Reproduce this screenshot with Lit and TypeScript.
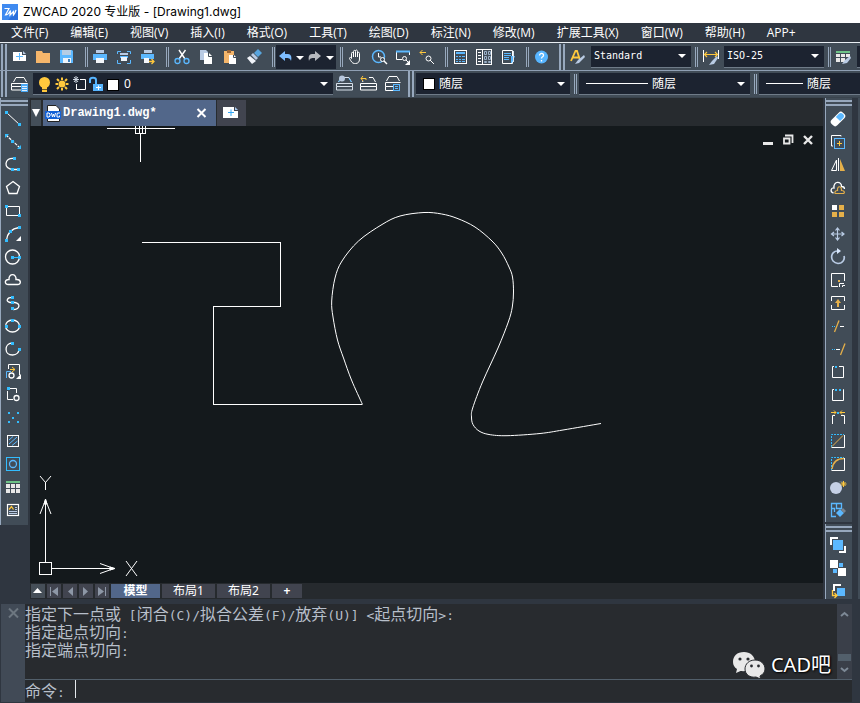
import { LitElement, html, css, svg, type SVGTemplateResult } from "lit";
import { customElement, property, state } from "lit/decorators.js";
import { classMap } from "lit/directives/class-map.js";

const W = "#ffffff";
const B = "#5bb8ff";
const C = "#33bdff";
const Y = "#ffc83d";
const O = "#e5b04a";
const P = "#b9cbe4";

const dot = (x: number, y: number, c = C) =>
  svg`<rect x=${x - 1} y=${y - 1} width="3" height="3" fill=${c} />`;
const ln = (d: string, c = W, w = 1) =>
  svg`<path d=${d} fill="none" stroke=${c} stroke-width=${w} />`;
const fl = (d: string, c = W) => svg`<path d=${d} fill=${c} />`;

const stack = (c = W) => svg`
  ${ln("M6.500 10L9 5.500H17L19.500 10M4.500 11.500H20.500M4.500 11.500V14.500H20.500V11.500M4.500 14.500V18H20.500V14.500", c)}`;

/* Top icons sit in a 24x24 box, side icons in a 24x23 box. */
const icons: Record<string, SVGTemplateResult> = {
  new: svg`${fl("M6 7H15V10H19V16H6Z")}${ln("M9 11.500H16M12.500 8V15", B)}${fl("M16 6L19 9H16Z", P)}`,
  open: fl("M5 6H11L12 8H19V18H5Z", "#f5b66b"),
  save: svg`${fl("M5 5H17L18 6V18H5Z", B)}${fl("M7 5H16V10H7Z", "#b5cde4")}${fl("M8 13H16V18H8Z", "#eef4fb")}${fl("M13 14H15V17H13Z", "#3f82bd")}`,
  print: svg`${fl("M8 5H16V8H8Z", P)}${fl("M5 9H19V15H5Z", B)}${fl("M8 13H16V18H8Z", "#f4f7fb")}`,
  preview: svg`${ln("M5.500 9V6.500H9M15 6.500H18.500V9M18.500 15V18.500H15M9 18.500H5.500V15", B)}${fl("M8 8H16V10H8Z", P)}${fl("M8 11H16V13H8Z", B)}${fl("M9 12H15V16H9Z", "#eef4fb")}`,
  plot: svg`${fl("M8 5H16V8H8Z", P)}${fl("M5 9H18V14H5Z", B)}${fl("M8 13H13V18H8Z", "#f4f7fb")}${ln("M13 16.500H18M15.500 14L18 16.500L15.500 19", Y, 1.3)}`,
  cut: svg`${ln("M9 5L15 14M15.500 5L9 14", W, 1.4)}<circle cx="7.500" cy="16" r="2.500" fill="none" stroke=${B} stroke-width="1.300"/><circle cx="16.500" cy="16" r="2.500" fill="none" stroke=${B} stroke-width="1.300"/>`,
  copy: svg`${fl("M6 5H12L14 7V15H6Z", P)}${fl("M10 8H15L18 11V19H10Z")}${ln("M14.500 8V11.500H18", "#414c57")}`,
  paste: svg`${fl("M6 6H16V18H6Z", "#f5b66b")}${fl("M9 5H13V8H9Z", "#9a6537")}${fl("M11 10H16L18 12V19H11Z")}${ln("M15.500 10V12.500H18", "#414c57")}`,
  brush: svg`${fl("M16 4L20 8L16 12L12 8Z", "#58a5de")}${fl("M11 8L16 13L14 15L9 10Z", P)}${fl("M8 11L14 16L10 19L5 13Z", "#f2f5fa")}`,
  hand: ln("M8.500 13.500V8.500C8.500 7 10 7 10.500 8.500V6.500C10.500 5 12.500 5 12.500 6.500V5.500C13 4.500 14.500 5 14.500 6.500V8C15 7 16.500 7 16.500 8.500V14C16.500 17 15 18.500 12.500 18.500H11.500C9 18.500 8 16 6.500 13.500C6.500 12 8 12 8.500 13.500M10.500 8V12M12.500 7V12M14.500 8V12", W),
  zoomrt: svg`<circle cx="11.500" cy="11.500" r="6" fill="none" stroke=${B} stroke-width="1.500"/>${ln("M11.500 8V12H14", W)}<circle cx="15.500" cy="14.500" r="2" fill="#414c57" stroke="#fff"/>${ln("M17 16L20 19", W, 1.4)}`,
  zoomwin: svg`${ln("M5.500 14.500V6.500H18.500V10M5.500 14.500H11", W)}${ln("M5 6.500H19", B, 2)}<circle cx="13.500" cy="13.500" r="2" fill="none" stroke="#fff"/>${ln("M15 15L17 17", W)}${fl("M19 15V20H14Z")}`,
  zoomprev: svg`${ln("M5 7.500H11M7.500 5L5 7.500L7.500 10", Y)}<circle cx="13.500" cy="13.500" r="2.500" fill="none" stroke="#fff"/>${ln("M15 15L19 19", W)}`,
  calc: svg`<rect x="6.500" y="5.500" width="12" height="13" fill="none" stroke="#fff"/>${fl("M8 7H17V9H8Z", B)}${ln("M8 11.500H17M8 14.500H17M8 16.500H17", B)}${ln("M10.500 10V18M13.500 10V18", "#414c57")}`,
  palette: svg`<rect x="4.500" y="4.500" width="15" height="15" fill="none" stroke="#fff"/>${ln("M10.500 4V20")}${ln("M6 7.500H9M6 10.500H9M6 13.500H9M6 16.500H9", W)}<path d="M12.500 6.500h2v3h-2zM16.500 6.500h2v3h-2zM12.500 11.500h2v3h-2zM16.500 11.500h2v3h-2zM12.500 16.500h2v1h-2zM16.500 16.500h2v1h-2z" fill="none" stroke="#9bb0c8"/>`,
  props: svg`${ln("M6.500 5.500H16.500V18.500H6.500Z")}${ln("M8 8.500H15M8 10.500H15M8 12.500H13M8 14.500H13", B)}${fl("M15 11H19L16 18H15Z", B)}${fl("M17 6H18V17H17Z", "#dce6f0")}`,
  style: svg`${ln("M5 16L9.500 6H11L14 15M7 12.500H13", Y, 1.8)}${fl("M18 10L19 12L13 18L9 19L12 15Z", P)}`,
  dim: svg`${ln("M4.500 5V17M19.500 5V14")}${ln("M5 9.500H19M8 7L5.500 9.500L8 12M16 7L18.500 9.500L16 12", Y, 1.2)}${fl("M18 11L19 13L15 19L10 20L13 16Z", P)}`,
  table: svg`${fl("M5 6H19V8H5Z", "#6cc287")}${fl("M5 9H9V12H5ZM10 9H14V12H10ZM15 9H19V12H15ZM5 13H9V17H5ZM10 13H14V17H10Z", "#e8e8e8")}${fl("M19 11L20 13L16 18L11 19L14 15Z", P)}`,
  layers: svg`${stack()}${fl("M14 12H21V20H14Z", "#4aa9f5")}${ln("M15 14.500H20M15 16.500H20M15 18.500H20", "#dff0ff")}`,
  laycur: svg`${stack("#d7e0ea")}${ln("M6.500 10L9 6.500M17 6.500L19.500 10", B)}<circle cx="10" cy="6.500" r="3" fill="#b7c7dd"/>`,
  layprev: svg`${stack()}${fl("M4 3H13V9H4Z", "#414c57")}${ln("M10 8V6.500H5M7 4L5 6.500L7 9", Y)}`,
  laystate: svg`${ln("M6.500 9L9 4.500H17L19.500 9M5.500 10.500H20.500M5.500 10.500V14.500H13M5.500 14.500V18.500H13")}<rect x="13.500" y="12.500" width="6" height="6" fill="#414c57" stroke=${B}/>${ln("M15 14.500H18M15 16.500H18", B)}`,

  line: svg`${ln("M6 5L19 17")}${dot(5, 4)}${dot(18, 16)}`,
  xline: svg`<path d="M5 4L18 16" stroke="#fff" stroke-width="1.200" stroke-dasharray="3 1"/>${dot(11, 10)}${fl("M4 3H8L4 7ZM20 18H16L20 14Z", C)}`,
  pline: svg`${ln("M13 4.500C3 3 2 15.500 12 15.500H17", W, 1.3)}${dot(13, 4)}${dot(11, 15)}${dot(17, 15)}`,
  polygon: ln("M12 4.500L18.500 9.500L16 16.500H8L5.500 9.500Z", W, 1.3),
  rect: svg`${ln("M5.500 6.500H18.500V15.500H5.500Z")}${dot(5, 6)}${dot(18, 15)}`,
  arc: svg`${ln("M5.500 17C6.500 10 11 5.500 18 4.500", W, 1.3)}${dot(5, 17)}${dot(9, 8)}${dot(18, 4)}${fl("M20 13V18H15Z")}`,
  circle: svg`<circle cx="11.500" cy="11" r="7" fill="none" stroke="#fff" stroke-width="1.300"/>${ln("M12 11.500H18", C)}${dot(11, 11)}${dot(18, 11)}`,
  cloud: ln("M7.500 15.500C3 15.500 3.500 10 8 10.500C7.500 4 15.500 4 15 10.500C20.500 10 20.500 15.500 16.500 15.500Z", W, 1.4),
  spline: svg`${ln("M12 5.500C6 5 4 9.500 9 10.500H14C20 11.500 19 17.500 12 17.500", W, 1.3)}${dot(11, 5)}${dot(11, 10)}${dot(11, 16)}`,
  ellipse: svg`<ellipse cx="11.500" cy="11" rx="7" ry="6" fill="none" stroke="#fff" stroke-width="1.300"/>${dot(11, 5)}${dot(5, 11)}${dot(18, 11)}`,
  earc: svg`${ln("M11 5C3 5.500 3 17 11.500 17C16 17 18 14 18 11", W, 1.3)}${dot(11, 5)}${dot(18, 11)}`,
  insert: svg`${ln("M7.500 8V3.500H18.500V14")}${ln("M9 8.500H14M11 6L14 8.500L11 11", Y)}${ln("M10 10.500H5.500V17", B)}<circle cx="10.500" cy="14.500" r="2.500" fill="none" stroke="#fff" stroke-width="1.300"/>${fl("M20 13V18H15Z")}`,
  block: svg`${ln("M9 4.500H15.500V9M6.500 7V15.500H12")}${dot(7, 4)}<circle cx="15.500" cy="14" r="2.500" fill="none" stroke="#fff" stroke-width="1.300"/>`,
  point: svg`<path d="M7 5h2v2h-2zM16 5h2v2h-2zM11 10h2v2h-2zM7 14h2v2h-2zM16 14h2v2h-2z" fill=${C}/>`,
  hatch: svg`<rect x="6.500" y="5.500" width="11" height="11" fill="none" stroke="#fff"/>${ln("M8 10L12 6.500M8 14L16 7M11 15.500L16.500 11", B)}`,
  region: svg`<rect x="5.500" y="4.500" width="13" height="13" fill="none" stroke=${C}/><circle cx="12" cy="11" r="3.500" fill="none" stroke=${B} stroke-width="1.300"/>`,
  grid: svg`${fl("M5 5H19V7H5Z", "#6cc287")}${fl("M5 8H9V12H5ZM10 8H14V12H10ZM15 8H19V12H15ZM5 13H9V17H5ZM10 13H14V17H10ZM15 13H19V17H15Z", "#e8e8e8")}`,
  mtext: svg`<rect x="6.500" y="5.500" width="11" height="11" fill="none" stroke="#fff" stroke-width="1.200"/>${ln("M8 10.500L10.500 7.500L12.500 10.500", Y, 1.3)}${ln("M14 8.500H16M14 10.500H16M8 12.500H16M8 14.500H16", P)}`,

  erase: svg`<g transform="rotate(-45 12 11)"><rect x="4" y="7" width="16" height="8" rx="3" fill="#fff"/><path d="M12 8H16A3 3 0 0 1 19 11V11A3 3 0 0 1 16 14H12Z" fill=${B}/></g>`,
  dup: svg`${ln("M15 5.500V4.500H5.500V15H7")}<rect x="8.500" y="7.500" width="10" height="10" fill="none" stroke=${B}/>${ln("M11 12.500H16M13.500 10V15", Y)}`,
  mirror: svg`${ln("M12.500 4V17")}${ln("M10.500 6V16.500H5.500Z")}${fl("M14 5L19 17H14Z", O)}`,
  offset: svg`${ln("M7.500 16C3.500 15 5 10.500 8 11C7 3.500 16 4 15.500 9.500C17.500 9.500 18.500 11 18.500 12", W, 1.3)}${ln("M9.500 16.500H17C19 16.500 19 13.500 15.500 13.500C15.500 8.500 11 8.500 11.500 13.500C8.500 13.500 8.500 16.500 9.500 16.500", O, 1.2)}`,
  array: svg`${fl("M6 5H11V10H6Z")}${fl("M13 5H18V10H13ZM6 12H11V17H6ZM13 12H18V17H13Z", O)}`,
  move: ln("M11.500 5V17M5.500 11H18M9.500 7.500L11.500 5L13.500 7.500M9.500 14.500L11.500 17L13.500 14.500M8 9L5.500 11L8 13M15.500 9L18 11L15.500 13", P, 1.2),
  rotate: svg`${ln("M12 5C4 4.500 3 16.500 12 17.500C17 17.500 19 13 18 10", P, 1.7)}${fl("M11 2L15 5L11 8Z", "#d7e6fb")}`,
  scale: svg`${ln("M12 17.500H5.500V4.500H18.500V12")}<rect x="12" y="11" width="2" height="2" fill=${O}/>${ln("M13.500 18V14.500H18M16.500 18V16.500H19", W)}`,
  stretch: svg`${ln("M5.500 9V4.500H18.500V9M5.500 13V17.500H18.500V13")}${fl("M12 7L15 11H13V15H11V11H9Z", O)}`,
  trim: svg`${ln("M14 11.500H18")}${ln("M6 11.500H7M8 11.500H9", C)}${ln("M8.500 17L13 5.500", O, 1.3)}`,
  extend: svg`${ln("M10 11.500H14")}${ln("M6 11.500H7M8 11.500H9", C)}${ln("M14.500 17L19 5.500", O, 1.3)}`,
  brk1: svg`${ln("M8 5.500H6.500V16.500H17.500V5.500H13")}<rect x="9" y="5" width="2" height="2" fill=${C}/>`,
  brk2: svg`${ln("M8 5.500H6.500V16.500H17.500V5.500H17")}<path d="M9 5h2v2h-2zM13 5h2v2h-2z" fill=${C}/>`,
  join: svg`${ln("M6.500 17V8.500H9M15 8.500H18.500V17")}${ln("M5 5.500H10M8 3.500L10 5.500L8 7.500M19 5.500H14M16 3.500L14 5.500L16 7.500", Y)}<rect x="11" y="5" width="2" height="2" fill=${C}/>`,
  chamfer: svg`${ln("M5.500 17.500H18.500V5")}<path d="M5.500 17V4.500H18" fill="none" stroke=${C} stroke-dasharray="2 1"/>${ln("M6 16.500L17 5.500", O)}`,
  fillet: svg`${ln("M5.500 17.500H18.500V5")}<path d="M5.500 17V4.500H18" fill="none" stroke=${C} stroke-dasharray="2 1"/>${ln("M6 16C7 9 11 5.500 18 5.500", O, 1.4)}`,
  explode: svg`<circle cx="10" cy="12" r="6" fill="#c5d0e6"/>${ln("M13 6L16 5.500L17 8", "#5c6874", 1.5)}${ln("M17.500 5V11M14.500 8H20.500M15.500 6L19.500 10M19.500 6L15.500 10", Y)}`,
  purge: svg`${ln("M5.500 4.500H10.500V9.500H15.500V4.500H5.500V17.500H10M5.500 9.500H8.500V13", B, 1.3)}${fl("M14 10L18 14L14 18L10 14Z", B)}${fl("M17 9L20 12L18 14L15 11Z", "#7b8590")}`,
  front: svg`${ln("M12 4H5V11M19 12V18H13", W, 2)}${fl("M7 6H17V16H7Z", B)}`,
  back: svg`${fl("M4 3H12V11H4ZM12 11H20V19H12Z")}${fl("M13 6H17V10H13ZM7 12H11V16H7Z", B)}`,
  above: svg`${ln("M8 11V5H15", W, 2)}${fl("M11 8H19V16H11Z", B)}${ln("M6.500 10V15.500H11M8.500 13L11 15.500L8.500 18", Y, 1.3)}`,
};

type Pt = [number, number];

/* Catmull-Rom spline through a list of fit points. */
function smooth(p: Pt[]): string {
  let d = `M${p[0][0]} ${p[0][1]}`;
  for (let i = 0; i < p.length - 1; i++) {
    const a = p[i - 1] ?? p[i], b = p[i], c = p[i + 1], e = p[i + 2] ?? c;
    d += `C${b[0] + (c[0] - a[0]) / 6} ${b[1] + (c[1] - a[1]) / 6} ${c[0] - (e[0] - b[0]) / 6} ${c[1] - (e[1] - b[1]) / 6} ${c[0]} ${c[1]}`;
  }
  return d;
}

const omega: Pt[] = [
  [332.5, 278.5], [321.5, 254], [313.5, 232], [307.5, 214], [303, 191], [301.7, 175], [305, 152], [312, 135],
  [328.5, 115], [352, 98.500], [370, 90], [394, 86.5], [411.7, 88], [427, 92.3], [445, 101],
  [462, 115], [471.7, 127], [479, 141], [482.500, 151], [483.5, 166], [482.3, 181], [478.3, 196], [468, 222],
  [452.5, 256], [442.7, 282], [441.5, 291], [443, 298.500], [449, 305], [459, 308.5], [477, 309.7],
  [510, 307.5], [533, 304], [571, 297.5],
];

const shared = css`
  *, *::before { box-sizing: border-box; }
  button, input, select {
    font: inherit; color: inherit; background: none; border: 0; margin: 0; padding: 0;
    border-radius: 0; outline: none; appearance: none;
  }
  svg { display: block; flex: none; }
`;

@customElement("cad-tool")
class CadTool extends LitElement {
  @property() icon = "";
  @property({ type: Boolean }) side = false;
  static styles = [shared, css`
    :host { display: block; flex: none; width: 24px; }
    button { display: block; width: 24px; overflow: hidden; }
  `];
  render() {
    const h = this.side ? 23 : 24;
    return html`<button aria-label=${this.icon}>
      <svg width="24" height=${h} viewBox="0 0 24 ${h}">${icons[this.icon]}</svg>
    </button>`;
  }
}

@customElement("cad-combo")
class CadCombo extends LitElement {
  @property() label = "";
  @property() value = "";
  @property({ type: Boolean }) mono = false;
  @property({ type: Boolean }) bare = false;
  static styles = [shared, css`
    :host { display: flex; align-items: center; height: 22px; background: #1c2330; border-bottom: 1px solid #6f7b88; padding: 0 4px 0 3px; color: #fff; font-size: 12px; }
    select { flex: 1; min-width: 0; width: 0; height: 20px; }
    .mono { font-family: "DejaVu Sans Mono", monospace; font-size: 10px; }
    option { color: #fff; background: #1c2330; }
  `];
  render() {
    return html`<slot></slot>
      <select class=${classMap({ mono: this.mono })} aria-label=${this.label}>
        <option>${this.value}</option>
      </select>
      ${this.bare ? "" : html`<svg width="10" height="6" viewBox="0 0 10 6"><path d="M1 1H9L5 5Z" fill="#fff"/></svg>`}`;
  }
}

@customElement("app-root")
class AppRoot extends LitElement {
  @state() private tab = "模型";

  static styles = [shared, css`
    :host {
      display: flex; flex-direction: column; min-height: 100vh; overflow: hidden;
      background: #2f3640; color: #fff; font: 12px/16px "Noto Sans", "Noto Sans CJK SC", sans-serif;
    }
    .title { display: flex; align-items: center; gap: 5px; height: 23px; padding-left: 2px; background: #fff; color: #000; font-family: "Inter", "Noto Sans CJK SC", sans-serif; }
    .menu { display: flex; height: 20px; background: #2f3640; border-bottom: 1px solid #e8edf2; }
    .menu button { padding: 0 11px; white-space: nowrap; font-family: "Open Sans", "Noto Sans CJK SC", sans-serif; }
    .bar { display: flex; align-items: center; height: 28px; background: #414c57; border-bottom: 1px solid #8f9fb3; overflow: hidden; }
    .bar > * { flex: none; }
    .bar.second { height: 27px; border-bottom-color: #3a444e; }
    .grip { width: 7px; height: 26px; padding: 0 0 0 1px; }
    .grip::before { content: ""; display: block; width: 6px; height: 100%; border: solid #97a8bd; border-width: 0 2px; }
    .sep { width: 9px; height: 20px; padding-left: 6px; }
    .sep::before { content: ""; display: block; width: 3px; height: 100%; border: solid #97a8bd; border-width: 0 1px; }
    .wide { width: 10px; }
    .thin { width: 7px; padding-left: 4px; }
    .mid { width: 8px; padding-left: 4px; }
    .history { display: flex; align-items: center; width: 60px; height: 24px; background: #1c2330; }
    .combo { width: 100px; margin-left: 1px; }
    .layer { width: 300px; margin-left: 2px; margin-right: -1px; }
    .color { width: 154px; margin-left: 1px; }
    .ltype { width: 171px; margin-left: 2px; }
    .fill { flex: 1; min-width: 0; margin-left: 2px; }
    .swatch { width: 12px; height: 12px; background: #fff; border: 1px solid #000; margin: 0 4px; }
    .stroke { height: 1px; background: #fff; margin: 0 4px; width: 62px; }
    .stroke.short { width: 37px; }
    .lead { width: 11px; padding-left: 4px; }

    .main { display: flex; flex: 1; min-height: 400px; }
    .left { width: 28px; margin-right: 2px; }
    .strip { display: flex; flex-direction: column; background: #414c57; border-left: 1px solid #97a8bd; }
    .hgrip { height: 10px; padding-top: 2px; flex: none; }
    .hgrip::before { content: ""; display: block; height: 6px; border: solid #97a8bd; border-width: 2px 0; }
    .strip .end { height: 3px; }
    .right { width: 27px; margin: 0 6px 0 2px; height: 501px; overflow: hidden; display: flex; flex-direction: column; gap: 2px; }
    .right .strip { flex: none; }
    .edge { width: 2px; background: #414c57; }

    .center { display: flex; flex-direction: column; flex: 1; min-width: 0; }
    .tabs { display: flex; height: 28px; padding-left: 1px; background: #272b2f; }
    .tabs > * { margin-top: 2px; height: 26px; }
    .list { width: 10px; margin-right: 2px; background: #444f59; display: flex; align-items: center; justify-content: center; }
    .doc { display: flex; align-items: center; width: 173px; padding: 0 9px 0 2px; background: #52678a; margin-right: 1px; font: bold 12px/16px "Liberation Mono", monospace; gap: 1px; }
    .doc button { margin-left: auto; }
    .add { width: 29px; background: #41444f; padding: 0 2px; }
    .canvas { position: relative; flex: 1; background: #14191c; overflow: hidden; }
    .drawing { width: 100%; height: 100%; position: absolute; inset: 0; }
    .ucs { position: absolute; left: 0; bottom: 0; }
    .winctl { position: absolute; top: 5px; right: 5px; display: flex; }
    .sheets { display: flex; height: 16px; padding: 1px 0 1px 1px; gap: 2px; background: #262a2e; }
    .sheets button { height: 14px; background: #41444f; text-align: center; line-height: 14px; }
    .nav { width: 14px; }
    .nav.up { background: #464f58; }
    .sheet { width: 53px; }
    .sheets .plus { width: 30px; font-weight: bold; }
    .sheets .on { width: 49px; background: #52678a; font-weight: bold; }

    .command { display: flex; height: 104px; padding: 5px 8px 1px 1px; }
    .side { width: 24px; background: #414a56; padding-top: 3px; }
    .side svg { margin: 0 auto; }
    .console { flex: 1; min-width: 0; display: flex; flex-direction: column; background: #282b2f; color: #b7bfca; font: 16px/18px "Noto Sans CJK SC", sans-serif; }
    .console .lat { font-family: "DejaVu Sans Mono", monospace; font-size: 13px; line-height: 16px; }
    .log { display: flex; height: 75px; flex: none; }
    .lines { flex: 1; position: relative; }
    .lines p { display: flex; align-items: baseline; height: 18px; margin: 0; white-space: pre; }
    .scroll { width: 15px; background: #3a3f49; display: flex; flex-direction: column; align-items: center; padding: 7px 0 6px; }
    .thumb { width: 13px; height: 7px; background: #525f6b; margin: auto 0 6px; }
    .prompt { flex: 1; display: flex; align-items: center; border-top: 1px solid #525f6b; }
    .prompt label { display: flex; align-items: baseline; width: 50px; white-space: pre; }
    .prompt input { flex: 1; min-width: 0; }
    .caret { width: 1px; height: 18px; background: #e4e8ec; align-self: flex-start; }
    .mark { position: absolute; right: 6px; bottom: 0; display: flex; align-items: center; gap: 5px; color: #fff; font: 20px/28px "Noto Sans", "Noto Sans CJK SC", sans-serif; text-shadow: 0 0 2px #000, 1px 1px 2px #000; }
  `];

  private tools(names: string, side = false) {
    return names.split(" ").map((n) => html`<cad-tool icon=${n} ?side=${side}></cad-tool>`);
  }

  /* Half-width glyphs take the narrow face, ideographs keep the full-width one. */
  private mixed(text: string) {
    return text.split(/([\x20-\x7e]+)/).map((s) => (/^[\x20-\x7e]/.test(s) ? html`<span class="lat">${s}</span>` : s));
  }

  private nav(label: string, d: string, up = false) {
    return html`<button class=${classMap({ nav: true, up })} aria-label=${label}>
      <svg width="14" height="14" viewBox="0 0 14 14"><path d=${d} fill=${up ? W : "#8d97a6"} /></svg>
    </button>`;
  }

  render() {
    const menus = ["文件(F)", "编辑(E)", "视图(V)", "插入(I)", "格式(O)", "工具(T)", "绘图(D)", "标注(N)", "修改(M)", "扩展工具(X)", "窗口(W)", "帮助(H)", "APP+"];
    return html`
      <header class="title">
        <svg width="16" height="16" viewBox="0 0 16 16">
          <rect width="16" height="16" fill="#2a6fdc"/><path d="M0 0H16V6L6 16H0Z" fill="#3f8af0"/>
          <path d="M2.500 4.500H7L3.500 11C5.500 11 7 9.500 8.500 6.500L8 11L11.500 7.500L11.500 11C12.500 10 13.500 8 14 6" fill="none" stroke="#fff" stroke-width="1.200"/>
        </svg>
        <span>ZWCAD 2020 专业版 - [Drawing1.dwg]</span>
      </header>
      <nav class="menu">${menus.map((m) => html`<button>${m}</button>`)}</nav>

      <div class="bar">
        <span class="grip"></span>${this.tools("new open save")}
        <span class="sep"></span>${this.tools("print preview plot")}
        <span class="sep wide"></span>${this.tools("cut copy paste brush")}
        <span class="sep wide"></span>
        <button class="history" aria-label="undo and redo">
          <svg width="60" height="24" viewBox="0 0 60 24">
            <path d="M3 11L9 6V9H12C15 9 16 12 15 16C14 13 13 13 9 13V16Z" fill="#7dbdff"/>
            <path d="M20 11H28L24 15ZM50 11H58L54 15Z" fill="#fff"/>
            <path d="M45 11L39 6V9H36C33 9 32 12 33 16C34 13 35 13 39 13V16Z" fill="#b5b8bd"/>
          </svg>
        </button>
        <span class="sep thin"></span>${this.tools("hand zoomrt zoomwin zoomprev")}
        <span class="sep"></span>${this.tools("calc palette props")}
        <span class="sep"></span>
        <button aria-label="help">
          <svg width="26" height="24" viewBox="0 0 26 24"><circle cx="12.500" cy="12" r="6.500" fill="#57b5ff"/>
            <path d="M10.500 10.500C10.500 7.500 15 8 14.500 10.500C14.500 12 12.500 11.500 12.500 13.500M12.500 15V16.500" fill="none" stroke="#fff" stroke-width="1.300"/></svg>
        </button>
        <span class="grip lead"></span>${this.tools("style")}
        <cad-combo class="combo" label="text style" value="Standard" mono></cad-combo>
        <span class="sep mid"></span>${this.tools("dim")}
        <cad-combo class="combo" label="dimension style" value="ISO-25" mono></cad-combo>
        <span class="sep thin"></span>${this.tools("table")}
        <cad-combo class="fill" label="table style" value="" bare></cad-combo>
      </div>

      <div class="bar second">
        <span class="grip"></span>${this.tools("layers")}
        <cad-combo class="layer" label="layer" value="0">
          <svg width="88" height="22" viewBox="0 0 88 22">
            <circle cx="8.500" cy="9.500" r="5.500" fill="#ffc83d"/><path d="M6 14H11V19H6Z" fill="#ffc83d"/><path d="M6 16.500H11" stroke="#6b5a24"/>
            <circle cx="26" cy="11" r="3.500" fill="#ffc83d"/><path d="M26 4.500V7M26 15V17.500M19.500 11H22M30 11H32.500M21 6L23 8M29 14L31 16M31 6L29 8M23 14L21 16" stroke="#ffc83d" stroke-width="2"/>
            <path d="M37 6.500H43M40 3V10M38 4L42 9M42 4L38 9" stroke="#cfd8e2" fill="none"/><path d="M44 6.500H49.500V16.500H40.500V11" stroke="#fff" fill="none"/>
            <path d="M54 10V7C54 4 60 4 60 7V11" stroke="#57b5ff" stroke-width="2" fill="none"/><rect x="57" y="11" width="10" height="7" fill="#57b5ff"/><path d="M62.500 12.500V17M60 14.500H65" stroke="#fff"/>
            <rect x="71.500" y="6.500" width="11" height="11" fill="#fff" stroke="#000"/>
          </svg>
        </cad-combo>
        ${this.tools("laycur layprev laystate")}
        <span class="grip lead"></span>
        <cad-combo class="color" label="colour" value="随层"><span class="swatch"></span></cad-combo>
        <span class="sep thin"></span>
        <cad-combo class="ltype" label="linetype" value="随层"><span class="stroke"></span></cad-combo>
        <span class="sep thin"></span>
        <cad-combo class="fill" label="lineweight" value="随层" bare><span class="stroke short"></span></cad-combo>
      </div>

      <main class="main">
        <div class="left">
          <div class="strip"><span class="hgrip"></span>
            ${this.tools("line xline pline polygon rect arc circle cloud spline ellipse earc insert block point hatch region grid mtext", true)}
            <span class="end"></span></div>
        </div>
        <section class="center">
          <div class="tabs">
            <button class="list" aria-label="documents"><svg width="8" height="8" viewBox="0 0 8 8"><path d="M0 0H8L4 8Z" fill="#fff"/></svg></button>
            <div class="doc">
              <svg width="17" height="20" viewBox="0 0 17 20">
                <path d="M2.500 2.500H11L14.500 6V18.500H2.500Z" fill="#fff" stroke="#222"/><rect y="8" width="16" height="8" fill="#1261d6"/>
                <path d="M2 10V14H4L5 13V11L4 10ZM6.500 10L7.500 14L8.500 11L9.500 14L10.500 10M15 10H12.500L12 11V14H14.500V12.500" fill="none" stroke="#fff"/>
              </svg>
              <span>Drawing1.dwg*</span>
              <button aria-label="close"><svg width="11" height="10" viewBox="0 0 11 10"><path d="M1.500 1L9.500 9M9.500 1L1.500 9" stroke="#fff" stroke-width="2"/></svg></button>
            </div>
            <button class="add" aria-label="new drawing"><svg width="24" height="24" viewBox="0 0 24 24">
              <path d="M4 6H15V10H19V17H4Z" fill="#fff"/><path d="M16 6L19 9H16Z" fill="#a8c8ee"/><path d="M9 11.500H15M12 8.500V15" stroke="#33a6f5"/></svg></button>
          </div>
          <div class="canvas">
            <svg class="drawing" fill="none" stroke="#fff">
              <path d="M77 2.500H145M110.500 7V36M105.500 0V7.500H115.500V0M109.500 0V7M112.500 0V7" shape-rendering="crispEdges"/>
              <path d="M112 116.500H250.500V180.500H183.500V278.500H332" shape-rendering="crispEdges"/>
              <path d=${smooth(omega)}/>
            </svg>
            <svg class="ucs" width="120" height="110" viewBox="0 0 120 110" fill="none" stroke="#fff">
              <path d="M9.500 89.500H21.500V101.500H9.500ZM15.500 89V27M22 95.500H84" shape-rendering="crispEdges"/>
              <path d="M10 41L15.500 27L21 41M70 90.500L84 95.500L70 100.500M10 3L15.500 9.500L21 3M15.500 9V17M96 88L107 103M107 88L96 103"/>
              <path d="M14 31L15.500 26L17 31ZM80 94L85 95.500L80 97Z" fill="#fff"/>
            </svg>
            <div class="winctl">
              <button aria-label="minimize"><svg width="20" height="18" viewBox="0 0 20 18"><path d="M5 11H15V14H5Z" fill="#e8e8e8"/></svg></button>
              <button aria-label="restore"><svg width="20" height="18" viewBox="0 0 20 18"><path d="M7 4.500H14.500V12M6 7.500H11.500V12.500H6Z" fill="none" stroke="#e8e8e8" stroke-width="1.800"/></svg></button>
              <button aria-label="close"><svg width="20" height="18" viewBox="0 0 20 18"><path d="M6 5L14 13M14 5L6 13" stroke="#e8e8e8" stroke-width="2.400"/></svg></button>
            </div>
          </div>
          <div class="sheets">
            ${this.nav("expand", "M2 9L6.500 4L11 9Z", true)}
            ${this.nav("first", "M3 3H4V12H3ZM11 3V12L5 7.500Z")}
            ${this.nav("previous", "M10 3V12L5 7.500Z")}
            ${this.nav("next", "M4 3V12L9 7.500Z")}
            ${this.nav("last", "M3 3V12L9 7.500ZM10 3H11V12H10Z")}
            ${["模型", "布局1", "布局2"].map((s) => html`<button class=${classMap({ sheet: true, on: s === this.tab })} @click=${() => (this.tab = s)}>${s}</button>`)}
            <button class="plus" aria-label="new layout">+</button>
          </div>
        </section>
        <div class="right">
          <div class="strip"><span class="hgrip"></span>
            ${this.tools("erase dup mirror offset array move rotate scale stretch trim extend brk1 brk2 join chamfer fillet explode purge", true)}</div>
          <div class="strip"><span class="hgrip"></span>${this.tools("front back above", true)}</div>
        </div>
        <div class="edge"></div>
      </main>

      <footer class="command">
        <div class="side"><svg width="11" height="12" viewBox="0 0 11 12"><path d="M1 1.500L10 10.500M10 1.500L1 10.500" stroke="#6d7780" stroke-width="2"/></svg></div>
        <div class="console">
          <div class="log">
            <div class="lines">
              ${["指定下一点或 [闭合(C)/拟合公差(F)/放弃(U)] <起点切向>:", "指定起点切向:", "指定端点切向:"].map((l) => html`<p>${this.mixed(l)}</p>`)}
              <div class="mark">
                <svg width="34" height="28" viewBox="0 0 34 28">
                  <path d="M12 1C5 1 1 5 1 11C1 14 2.500 16.500 5 18L4 22L8.500 20C17 21 23 17 23 11C23 5 18 1 12 1Z" fill="#e8e8e8"/>
                  <path d="M23 9C17 9 13 13 13 18C13 23.500 18 27 24 26L28.500 28L28 25C31 23.500 33 21 33 18C33 13 29 9 23 9Z" fill="#e8e8e8" stroke="#282b2f"/>
                  <circle cx="8" cy="8" r="1.600" fill="#282b2f"/><circle cx="16" cy="8" r="1.600" fill="#282b2f"/>
                  <circle cx="19.500" cy="15" r="1.400" fill="#282b2f"/><circle cx="26.500" cy="15" r="1.400" fill="#282b2f"/>
                </svg>
                <span>CAD吧</span>
              </div>
            </div>
            <div class="scroll">
              <svg width="9" height="6" viewBox="0 0 9 6"><path d="M1 5L4.500 2L8 5" fill="none" stroke="#7d8996" stroke-width="2"/></svg>
              <span class="thumb"></span>
              <svg width="9" height="6" viewBox="0 0 9 6"><path d="M1 1L4.500 4L8 1" fill="none" stroke="#7d8996" stroke-width="2"/></svg>
            </div>
          </div>
          <div class="prompt"><label for="cmd">${this.mixed("命令: ")}</label><span class="caret"></span><input id="cmd" type="text" autocomplete="off"></div>
        </div>
      </footer>
    `;
  }
}
